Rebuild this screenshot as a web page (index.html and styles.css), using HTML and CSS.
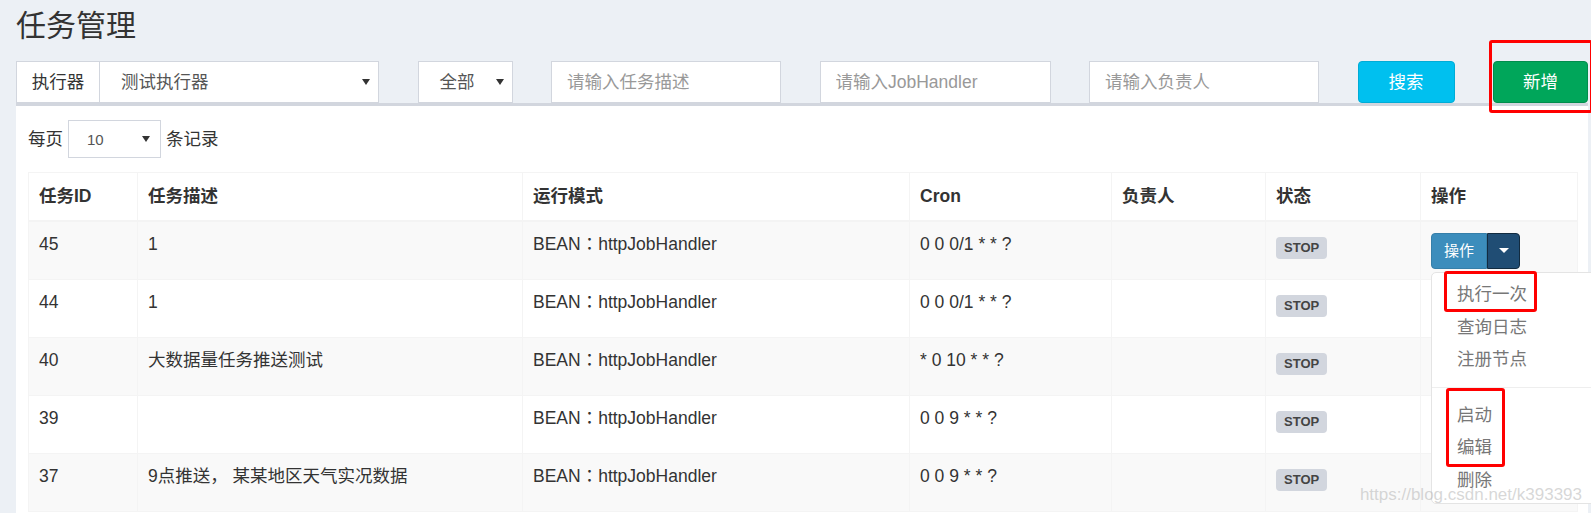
FILE: index.html
```html
<!DOCTYPE html>
<html lang="zh-CN">
<head>
    <meta charset="UTF-8">
    <title>任务管理</title>
    <link rel="stylesheet" href="styles.css">
</head>
<body>

    <div class="content">
        <h1 class="page-title">任务管理</h1>

        <div class="filter-bar">
            <div class="input-group">
                <span class="addon">执行器</span>
                <div class="select">测试执行器</div>
            </div>
            <div class="select">全部</div>
            <input type="text" class="form-control" placeholder="请输入任务描述">
            <input type="text" class="form-control" placeholder="请输入JobHandler">
            <input type="text" class="form-control" placeholder="请输入负责人">
            <button class="btn btn-info">搜索</button>
            <button class="btn btn-success">新增</button>
        </div>

        <div class="box">
            <div class="length">
                <span>每页</span>
                <div class="select select-sm">10</div>
                <span>条记录</span>
            </div>

            <table class="jobs">
                <colgroup>
                    <col style="width:109px">
                    <col style="width:385px">
                    <col style="width:387px">
                    <col style="width:202px">
                    <col style="width:154px">
                    <col style="width:155px">
                    <col style="width:157px">
                </colgroup>
                <thead>
                    <tr>
                        <th>任务ID</th>
                        <th>任务描述</th>
                        <th>运行模式</th>
                        <th>Cron</th>
                        <th>负责人</th>
                        <th>状态</th>
                        <th>操作</th>
                    </tr>
                </thead>
                <tbody>
                    <tr>
                        <td>45</td>
                        <td>1</td>
                        <td class="mode" lang="zh-TW">BEAN：httpJobHandler</td>
                        <td>0 0 0/1 * * ?</td>
                        <td></td>
                        <td><span class="label">STOP</span></td>
                        <td>
                            <div class="btn-group">
                                <button class="btn btn-primary">操作</button>
                                <button class="btn dropdown-toggle open"><span class="caret"></span></button>
                                <ul class="dropdown-menu">
                                    <li><a href="#">执行一次</a></li>
                                    <li><a href="#">查询日志</a></li>
                                    <li><a href="#">注册节点</a></li>
                                    <li class="divider"></li>
                                    <li><a href="#">启动</a></li>
                                    <li><a href="#">编辑</a></li>
                                    <li><a href="#">删除</a></li>
                                </ul>
                            </div>
                        </td>
                    </tr>
                    <tr>
                        <td>44</td>
                        <td>1</td>
                        <td class="mode" lang="zh-TW">BEAN：httpJobHandler</td>
                        <td>0 0 0/1 * * ?</td>
                        <td></td>
                        <td><span class="label">STOP</span></td>
                        <td>
                            <div class="btn-group">
                                <button class="btn btn-primary">操作</button>
                                <button class="btn dropdown-toggle"><span class="caret"></span></button>
                            </div>
                        </td>
                    </tr>
                    <tr>
                        <td>40</td>
                        <td>大数据量任务推送测试</td>
                        <td class="mode" lang="zh-TW">BEAN：httpJobHandler</td>
                        <td>* 0 10 * * ?</td>
                        <td></td>
                        <td><span class="label">STOP</span></td>
                        <td>
                            <div class="btn-group">
                                <button class="btn btn-primary">操作</button>
                                <button class="btn dropdown-toggle"><span class="caret"></span></button>
                            </div>
                        </td>
                    </tr>
                    <tr>
                        <td>39</td>
                        <td></td>
                        <td class="mode" lang="zh-TW">BEAN：httpJobHandler</td>
                        <td>0 0 9 * * ?</td>
                        <td></td>
                        <td><span class="label">STOP</span></td>
                        <td>
                            <div class="btn-group">
                                <button class="btn btn-primary">操作</button>
                                <button class="btn dropdown-toggle"><span class="caret"></span></button>
                            </div>
                        </td>
                    </tr>
                    <tr>
                        <td>37</td>
                        <td>9点推送， 某某地区天气实况数据</td>
                        <td class="mode" lang="zh-TW">BEAN：httpJobHandler</td>
                        <td>0 0 9 * * ?</td>
                        <td></td>
                        <td><span class="label">STOP</span></td>
                        <td>
                            <div class="btn-group">
                                <button class="btn btn-primary">操作</button>
                                <button class="btn dropdown-toggle"><span class="caret"></span></button>
                            </div>
                        </td>
                    </tr>
                </tbody>
            </table>
        </div>
    </div>

    <!-- red boxes drawn over the screenshot -->
    <div class="mark mark-add"></div>
    <div class="mark mark-run"></div>
    <div class="mark mark-start"></div>

    <div class="watermark">https://blog.csdn.net/k393393</div>

</body>
</html>
```

FILE: styles.css
```css
* {
    box-sizing: border-box;
}
html, body {
    overflow: hidden;
}
body {
    margin: 0;
    background: #ecf0f5;
    font-family: "Liberation Sans", "Noto Sans CJK SC", sans-serif;
    font-size: 17.5px;
    line-height: 25px;
    color: #333;
}
.content {
    width: 1591px;
    padding-left: 16px;
}
.page-title {
    margin: 0;
    padding-top: 8px;
    font-size: 30px;
    line-height: 36px;
    font-weight: normal;
    color: #333;
}

/* filter row */
.filter-bar {
    display: grid;
    grid-template-columns: 363px 95px 230px 231px 230px 97px 95px;
    column-gap: 38.5px;
    height: 42px;
    margin-top: 17px;
}
.input-group {
    display: flex;
}
.addon {
    width: 83px;
    flex: none;
    display: flex;
    align-items: center;
    justify-content: center;
    background: #fff;
    border: 1px solid #d2d6de;
    border-right: none;
}
.select {
    display: flex;
    align-items: center;
    padding: 0 8px 0 21px;
    background: #fff;
    border: 1px solid #d2d6de;
    color: #555;
}
.select::after {
    content: "";
    margin-left: auto;
    border-left: 4px solid transparent;
    border-right: 4px solid transparent;
    border-top: 6px solid #333;
}
.input-group .select {
    flex: 1;
}
.form-control {
    height: 42px;
    padding: 0 15px;
    border: 1px solid #d2d6de;
    background: #fff;
    font: inherit;
    color: #555;
    outline: none;
}
.form-control::placeholder {
    color: #999;
}
.btn {
    border: 1px solid transparent;
    border-radius: 4px;
    color: #fff;
    font: inherit;
    cursor: pointer;
}
.btn-info {
    background: #00c0ef;
    border-color: #00acd6;
}
.btn-success {
    background: #00a65a;
    border-color: #008d4c;
}

/* list box */
.box {
    width: 1572px;
    padding: 12px;
    background: #fff;
    border-top: 3px solid #d2d6de;
}
.length {
    display: flex;
    align-items: center;
    gap: 5px;
    height: 38px;
    margin-top: 2px;
}
.select-sm {
    width: 93px;
    height: 38px;
    padding: 0 10px 0 18px;
    font-size: 15px;
}
.jobs {
    width: 1549px;
    margin-top: 14px;
    table-layout: fixed;
    border-collapse: collapse;
    border: 1px solid #f4f4f4;
}
.jobs th,
.jobs td {
    padding: 10px;
    border: 1px solid #f4f4f4;
    text-align: left;
    vertical-align: top;
    white-space: nowrap;
}
.jobs th {
    height: 48px;
    vertical-align: middle;
    border-bottom-width: 2px;
    font-weight: bold;
}
.jobs td {
    height: 57px;
}
.jobs tbody tr:nth-child(odd) {
    background: #f9f9f9;
}
.jobs .mode {
    font-family: "Liberation Sans", "Noto Sans CJK TC", sans-serif;
}
.label {
    display: inline-block;
    margin-top: 5px;
    padding: 3px 8px 4px;
    background: #d2d6de;
    color: #444;
    font-size: 13px;
    font-weight: bold;
    line-height: 15px;
    border-radius: 4px;
}

/* action button with menu */
.btn-group {
    position: relative;
    display: flex;
    margin-top: 1px;
}
.btn-group .btn {
    height: 36px;
    font-size: 15px;
}
.btn-primary {
    padding: 0 12px;
    background: #3c8dbc;
    border-color: #367fa9;
    border-radius: 4px 0 0 4px;
}
.dropdown-toggle {
    width: 33px;
    display: flex;
    align-items: center;
    justify-content: center;
    background: #3c8dbc;
    border-color: #367fa9;
    border-radius: 0 4px 4px 0;
}
.dropdown-toggle.open {
    background: #204d74;
    border-color: #122b40;
}
.caret {
    border-left: 5px solid transparent;
    border-right: 5px solid transparent;
    border-top: 5px solid #fff;
}
.dropdown-menu {
    position: absolute;
    top: 100%;
    left: 0;
    z-index: 10;
    width: 200px;
    margin: 3px 0 0;
    padding: 6px 0;
    list-style: none;
    background: #fff;
    border: 1px solid #e4e4e4;
    border-radius: 5px;
}
.dropdown-menu a {
    display: block;
    padding: 3.75px 25px;
    line-height: 25px;
    color: #777;
    text-decoration: none;
}
.dropdown-menu .divider {
    height: 1px;
    margin: 11px 0;
    background: #eee;
}

/* annotations */
.mark {
    position: absolute;
    z-index: 20;
    border: 3px solid #f00;
    border-radius: 3px;
}
.mark-add {
    left: 1489px;
    top: 40px;
    width: 104px;
    height: 73px;
}
.mark-run {
    left: 1444px;
    top: 271px;
    width: 93px;
    height: 41px;
}
.mark-start {
    left: 1446px;
    top: 388px;
    width: 59px;
    height: 79px;
}
.watermark {
    position: absolute;
    z-index: 30;
    right: 9px;
    top: 485px;
    font-size: 17px;
    line-height: 20px;
    color: rgba(175, 175, 175, 0.5);
}
```
